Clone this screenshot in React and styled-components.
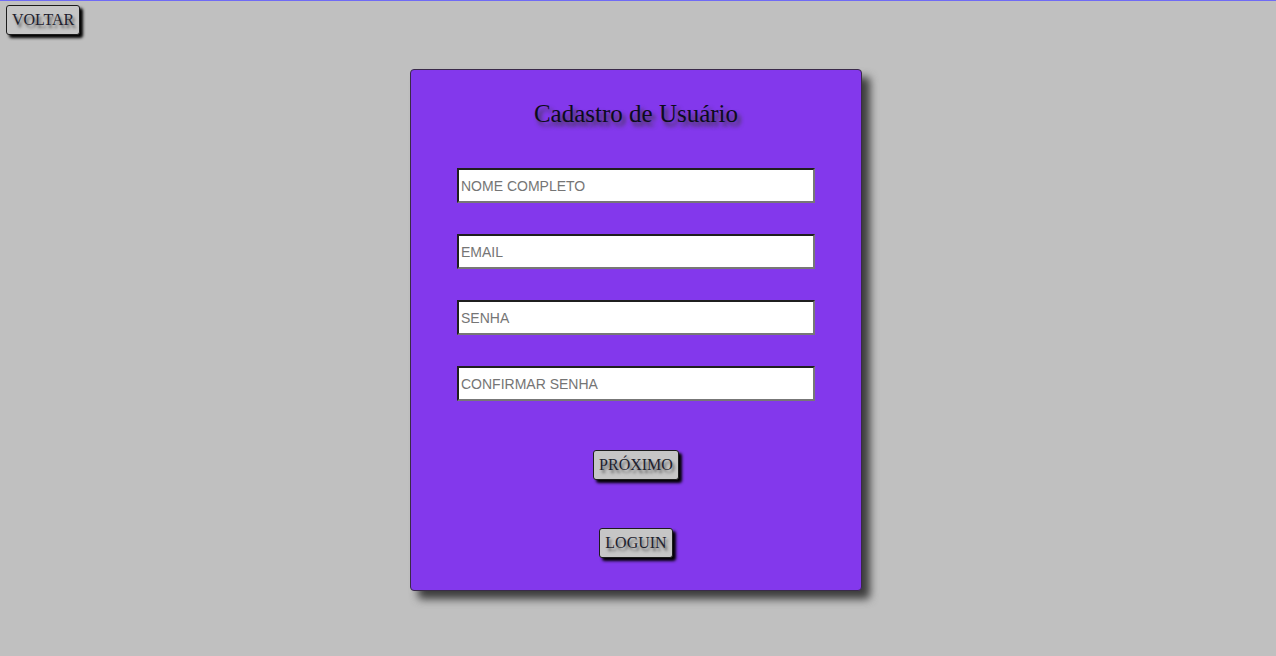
import React from 'react';
import styled, { createGlobalStyle } from 'styled-components';

const GlobalStyle = createGlobalStyle`
  body {
    margin: 0;
    background-color: #c0c0c0;
    font-family: "Liberation Serif", "Times New Roman", serif;
  }
`;

const Page = styled.div`
  min-height: 100vh;
  box-sizing: border-box;
  border-top: 1px solid #6f6bf5;
  background-color: #c0c0c0;
`;

const TopBar = styled.div`
  display: flex;
  padding: 4px 6px 0;
`;

const RaisedButton = styled.button`
  font-family: "Liberation Serif", "Times New Roman", serif;
  font-size: 16px;
  line-height: 18px;
  color: #1e1e2e;
  background-color: #c6c6c6;
  border: 1px solid #1c1c1c;
  border-radius: 3px;
  padding: 5px 5px;
  box-shadow: 3px 3px 3px #000;
  text-shadow: 2px 3px 3px #5e5e5e;
  cursor: pointer;
`;

const Main = styled.main`
  display: flex;
  justify-content: center;
  padding: 34px 4px 0 0;
`;

const Card = styled.form`
  width: 452px;
  box-sizing: border-box;
  display: flex;
  flex-direction: column;
  align-items: center;
  padding: 30px 0 32px;
  background-color: #8338ec;
  border: 1px solid #3a2a4a;
  border-radius: 4px;
  box-shadow: 8px 8px 9px #3c3c3c;
`;

const Title = styled.h1`
  margin: 0 0 40px;
  font-size: 25px;
  line-height: 28px;
  font-weight: normal;
  color: #0c0c1a;
  text-shadow: 3px 4px 4px #3a3a3a;
`;

const Fields = styled.div`
  display: flex;
  flex-direction: column;
  gap: 31px;
`;

const Input = styled.input`
  width: 358px;
  height: 35px;
  box-sizing: border-box;
  padding: 0 2px;
  font-family: "Liberation Sans", Arial, sans-serif;
  font-size: 14px;
  color: #222;
  background: #fff;
  border: 2px solid;
  border-color: #1f1f1f #777 #777 #1f1f1f;
  outline: none;

  &::placeholder {
    color: #757575;
  }
`;

const Actions = styled.div`
  display: flex;
  flex-direction: column;
  align-items: center;
  gap: 48px;
  margin-top: 49px;
`;

export default function App() {
  return (
    <>
      <GlobalStyle />
      <Page>
        <TopBar>
          <RaisedButton type="button">VOLTAR</RaisedButton>
        </TopBar>
        <Main>
          <Card onSubmit={e => e.preventDefault()}>
            <Title>Cadastro de Usuário</Title>
            <Fields>
              <Input type="text" placeholder="NOME COMPLETO" />
              <Input type="email" placeholder="EMAIL" />
              <Input type="password" placeholder="SENHA" />
              <Input type="password" placeholder="CONFIRMAR SENHA" />
            </Fields>
            <Actions>
              <RaisedButton type="submit">PRÓXIMO</RaisedButton>
              <RaisedButton type="button">LOGUIN</RaisedButton>
            </Actions>
          </Card>
        </Main>
      </Page>
    </>
  );
}
